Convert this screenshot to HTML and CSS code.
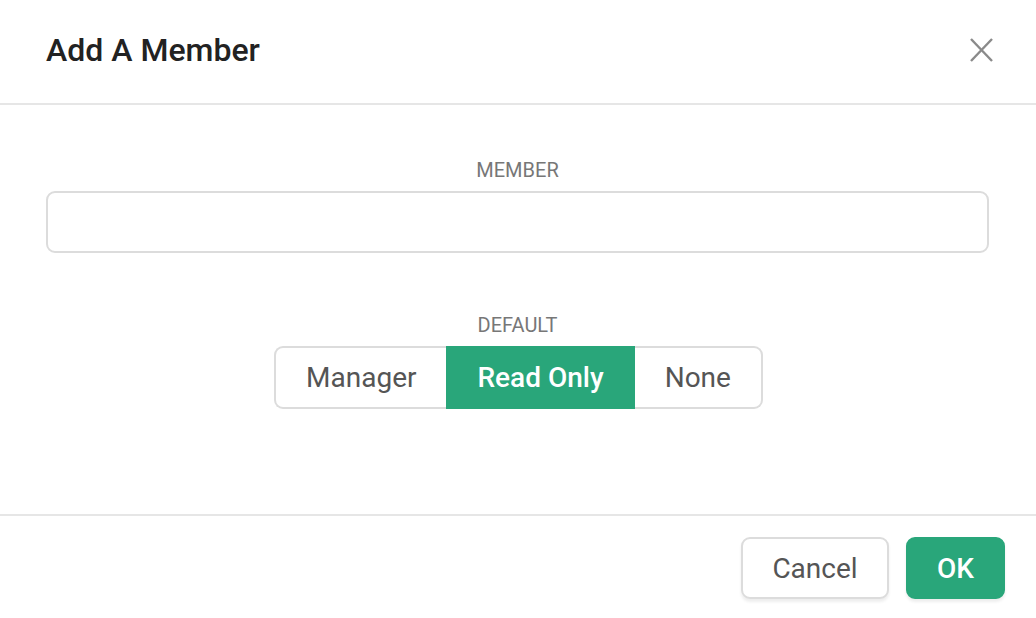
FILE: index.html
```html
<!DOCTYPE html>
<html lang="en">
<head>
<meta charset="utf-8">
<title>Add A Member</title>
<link rel="stylesheet" href="styles.css">
</head>
<body>
<div class="dialog">
  <header class="dialog-header">
    <h1 class="dialog-title">Add A Member</h1>
    <button class="close-btn" aria-label="Close">
      <svg width="23" height="24" viewBox="0 0 23 24" fill="none" stroke="#8a8a8a" stroke-width="2.4" stroke-linecap="butt">
        <line x1="1" y1="1" x2="22" y2="23"/>
        <line x1="22" y1="1" x2="1" y2="23"/>
      </svg>
    </button>
  </header>
  <main class="dialog-body">
    <label class="field-label" for="member">MEMBER</label>
    <input id="member" class="text-input" type="text">
    <div class="field-label default-label">DEFAULT</div>
    <div class="segmented">
      <button class="segment first">Manager</button>
      <button class="segment active">Read Only</button>
      <button class="segment last">None</button>
    </div>
  </main>
  <footer class="dialog-footer">
    <button class="btn btn-secondary">Cancel</button>
    <button class="btn btn-primary">OK</button>
  </footer>
</div>
</body>
</html>
```

FILE: styles.css
```css
* { box-sizing: border-box; }
html, body {
  margin: 0;
  padding: 0;
  background: #ffffff;
}
body {
  font-family: Roboto, "Liberation Sans", Arial, sans-serif;
  color: #555;
}
.dialog {
  width: 1036px;
  height: 618px;
  display: flex;
  flex-direction: column;
  background: #fff;
}
.dialog-header {
  height: 105px;
  border-bottom: 2px solid #e6e6e6;
  display: flex;
  align-items: center;
  justify-content: space-between;
  padding: 0 43px 4px 46px;
}
.dialog-title {
  margin: 0;
  font-size: 32px;
  font-weight: 500;
  color: #222;
}
.close-btn {
  border: none;
  background: none;
  padding: 0;
  width: 23px;
  height: 24px;
  display: flex;
  cursor: pointer;
}
.dialog-body {
  flex: 1;
  display: flex;
  flex-direction: column;
  align-items: center;
  padding: 53px 47px 0 46px;
}
.field-label {
  font-size: 20px;
  line-height: 25px;
  color: #777;
  margin-bottom: 8px;
}
.text-input {
  width: 100%;
  height: 62px;
  border: 2px solid #dcdcdc;
  border-radius: 9px;
  font: inherit;
  font-size: 28px;
  padding: 0 16px;
  outline: none;
}
.default-label {
  margin-top: 60px;
}
.segmented {
  display: flex;
  height: 63px;
  margin-left: 2px;
}
.segment {
  font-family: inherit;
  font-size: 28px;
  color: #555;
  background: #fff;
  border: 2px solid #dcdcdc;
  border-left: none;
  border-right: none;
  padding: 0 30px;
  margin: 0;
  cursor: pointer;
}
.segment.first {
  border-left: 2px solid #dcdcdc;
  border-radius: 9px 0 0 9px;
  padding: 0 30px;
}
.segment.last {
  border-right: 2px solid #dcdcdc;
  border-radius: 0 9px 9px 0;
  padding: 0 30px;
}
.segment.active {
  background: #29a67a;
  border-color: #29a67a;
  color: #fff;
  font-weight: 500;
  padding: 0 31px;
}
.dialog-footer {
  border-top: 2px solid #e6e6e6;
  display: flex;
  justify-content: flex-end;
  gap: 17px;
  padding: 21px 31px 19px 0;
}
.btn {
  height: 62px;
  font-family: inherit;
  font-size: 28px;
  border-radius: 9px;
  cursor: pointer;
  box-shadow: 0 3px 3px rgba(0, 0, 0, 0.07);
}
.btn-secondary {
  width: 148px;
  background: #fff;
  color: #555;
  border: 2px solid #dcdcdc;
}
.btn-primary {
  width: 99px;
  background: #29a67a;
  color: #fff;
  border: 2px solid #29a67a;
  font-weight: 500;
}
```
